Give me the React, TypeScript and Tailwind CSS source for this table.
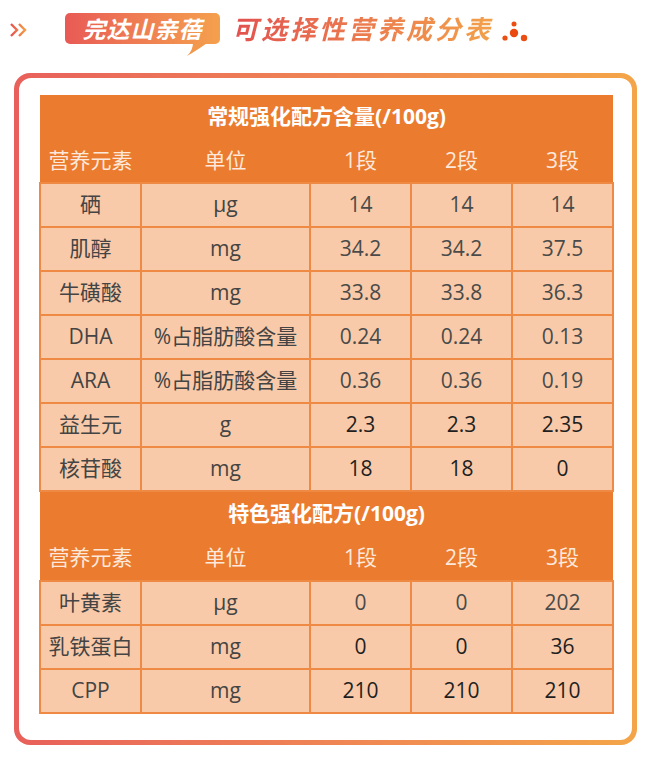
import React from "react";

type Row = { name: string; unit: string; v: [string, string, string]; strong?: boolean };

const regular: Row[] = [
  { name: "硒", unit: "μg", v: ["14", "14", "14"] },
  { name: "肌醇", unit: "mg", v: ["34.2", "34.2", "37.5"] },
  { name: "牛磺酸", unit: "mg", v: ["33.8", "33.8", "36.3"] },
  { name: "DHA", unit: "%占脂肪酸含量", v: ["0.24", "0.24", "0.13"] },
  { name: "ARA", unit: "%占脂肪酸含量", v: ["0.36", "0.36", "0.19"] },
  { name: "益生元", unit: "g", v: ["2.3", "2.3", "2.35"], strong: true },
  { name: "核苷酸", unit: "mg", v: ["18", "18", "0"], strong: true },
];

const special: Row[] = [
  { name: "叶黄素", unit: "μg", v: ["0", "0", "202"] },
  { name: "乳铁蛋白", unit: "mg", v: ["0", "0", "36"], strong: true },
  { name: "CPP", unit: "mg", v: ["210", "210", "210"], strong: true },
];

const font = { fontFamily: '"Open Sans", "Noto Sans CJK SC", sans-serif' };

function Section({ title, rows, tall }: { title: string; rows: Row[]; tall?: boolean }) {
  const hh = tall ? "h-[45px]" : "h-[44px]";
  return (
    <>
      <tr className="bg-[#eb7b2f]">
        <th colSpan={5} className={`${hh} text-white text-[21px] font-bold`}>
          {title}
        </th>
      </tr>
      <tr className="bg-[#eb7b2f] text-[#fde9dc]">
        {["营养元素", "单位", "1段", "2段", "3段"].map(h => (
          <th key={h} className={`${hh} font-normal text-[21px]`}>
            {h}
          </th>
        ))}
      </tr>
      {rows.map(r => (
        <tr key={r.name} className="bg-[#f8caa9] text-[21px]">
          <td className="h-[44px] border-2 border-[#ef8a45] text-[#444]">{r.name}</td>
          <td className="border-2 border-[#ef8a45] text-[#444]">{r.unit}</td>
          {r.v.map((v, i) => (
            <td
              key={i}
              className={`border-2 border-[#ef8a45] ${r.strong ? "text-[#1f1f1f] font-medium" : "text-[#4a4a4a]"}`}
            >
              {v}
            </td>
          ))}
        </tr>
      ))}
    </>
  );
}

export default function App() {
  return (
    <div className="w-[650px] h-[758px] bg-white overflow-hidden" style={font}>
      <div className="flex items-start h-[73px] pl-[9px] pt-[13px]">
        <svg width="19" height="16" viewBox="0 0 19 16" className="mt-[9px]">
          <defs>
            <linearGradient id="chev" x1="0" x2="1">
              <stop offset="0" stopColor="#e5544f" />
              <stop offset="1" stopColor="#f39a45" />
            </linearGradient>
          </defs>
          <path d="M2 2 L8 8 L2 14 M10 2 L16 8 L10 14" fill="none" stroke="url(#chev)" strokeWidth="2.4" />
        </svg>
        <div className="relative ml-[37px]">
          <div
            className="w-[155px] h-[31px] rounded-[5px] bg-gradient-to-r from-[#e85a55] to-[#f4a04d] flex items-center justify-center text-white text-[23px] font-semibold italic tracking-[1px]"
            style={{ fontFamily: '"Noto Sans CJK SC", sans-serif' }}
          >
            完达山亲蓓
          </div>
          <svg width="24" height="14" viewBox="0 0 24 14" className="absolute left-[120px] top-[30px]">
            <path d="M8 0 L22 0 Q14 6 2 13 Q8 7 8 0 Z" fill="#f2984c" />
          </svg>
        </div>
        <div
          className="ml-[12px] mt-[0px] text-[26px] leading-[30px] font-bold italic tracking-[3px] bg-gradient-to-r from-[#e2504f] to-[#f2a04a] bg-clip-text text-transparent"
          style={{ fontFamily: '"Noto Sans CJK SC", sans-serif' }}
        >
          可选择性营养成分表
        </div>
        <svg width="28" height="26" viewBox="0 0 28 26" className="ml-[8px] mt-[6px]">
          <circle cx="13" cy="5" r="2.5" fill="#ea4e12" />
          <circle cx="13" cy="14" r="4.2" fill="#ea4a10" />
          <circle cx="4" cy="19" r="2.6" fill="#ea4e12" />
          <circle cx="23" cy="19" r="3.2" fill="#ea4e12" />
        </svg>
      </div>

      <div className="ml-[14px] w-[623px] h-[672px] rounded-[16px] p-[5px] bg-gradient-to-r from-[#e8605b] to-[#f4a548]">
        <div className="w-full h-full bg-white rounded-[12px] pt-[17px] px-[20px]">
          <table className="w-[573px] table-fixed border-collapse text-center">
            <colgroup>
              <col className="w-[101px]" />
              <col className="w-[169px]" />
              <col className="w-[101px]" />
              <col className="w-[101px]" />
              <col className="w-[101px]" />
            </colgroup>
            <tbody>
              <Section title="常规强化配方含量(/100g)" rows={regular} />
              <Section title="特色强化配方(/100g)" rows={special} tall />
            </tbody>
          </table>
        </div>
      </div>
    </div>
  );
}
